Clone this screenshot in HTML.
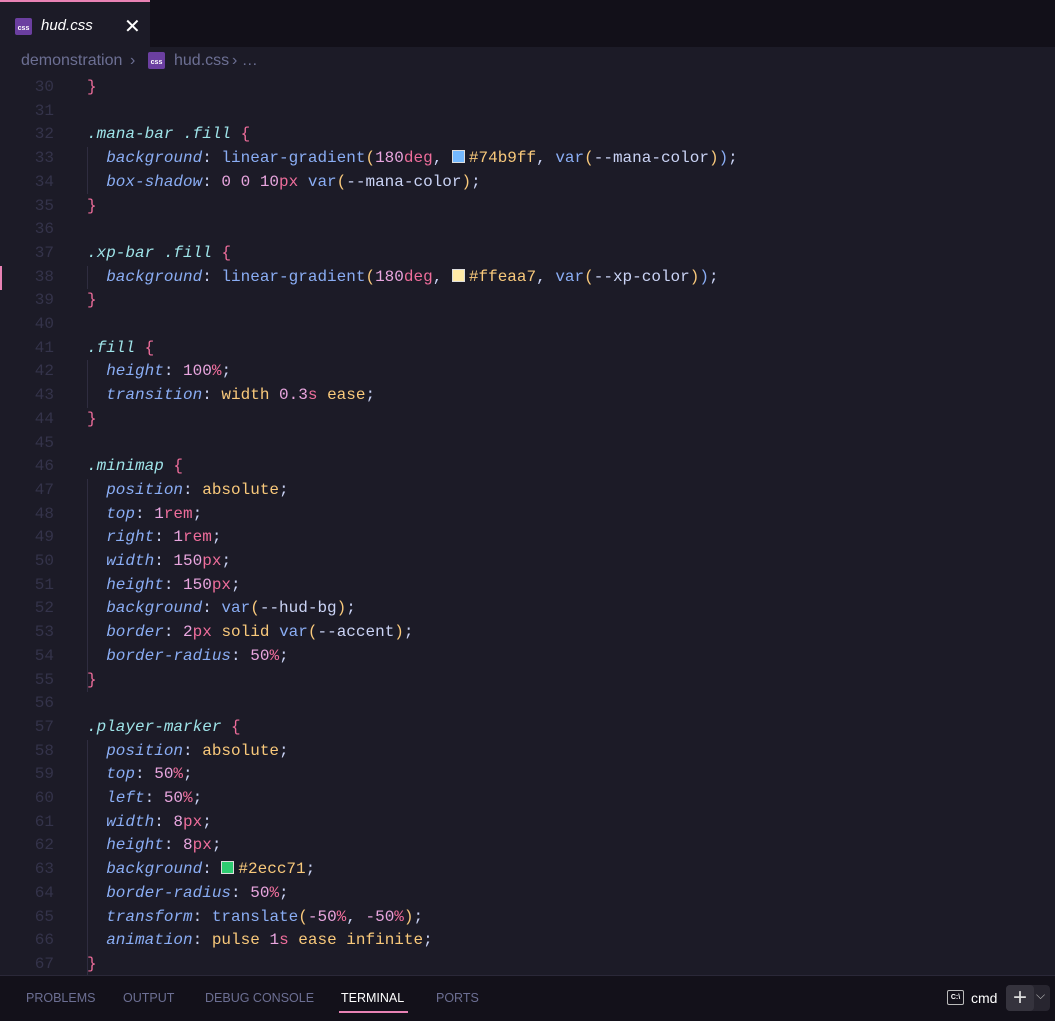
<!DOCTYPE html>
<html><head><meta charset="utf-8"><style>
*{margin:0;padding:0;box-sizing:border-box}
body{width:1055px;height:1021px;background:#1c1b27;overflow:hidden;position:relative;font-family:"Liberation Sans",sans-serif}
.tabbar{position:absolute;left:0;top:0;width:1055px;height:47px;background:#121019}
.tab{position:absolute;left:0;top:0;width:150px;height:47px;background:#1c1b27;border-top:2px solid #e882b4}
.icon{position:absolute;width:17px;height:17px;background:#6b3fa0;border-radius:2px;color:#fff;font:bold 7px "Liberation Sans",sans-serif;text-align:center;line-height:22px}
.tabname{position:absolute;left:41px;top:15px;font-size:15px;font-style:italic;color:#fff}
.close{position:absolute;left:124px;top:12px;color:#fff;font-size:20px}
.crumb{position:absolute;left:0;top:47px;width:1055px;height:28px;font-size:16px;color:#6c6f93}
.crumb span{position:absolute;top:5px}
.code{position:absolute;left:0;top:76px;font-family:"Liberation Mono",monospace;font-size:16px;line-height:23.7px;color:#cad3f5;white-space:pre}
.ln{position:absolute;left:0;width:54px;text-align:right;color:#34334a}
.tx{position:absolute;left:87px}
.s{color:#9ee3e8;font-style:italic}
.p{color:#8aadf4;font-style:italic}
.n{color:#e9a6df}
.u{color:#ee6d9b}
.k{color:#f9c97b}
.f{color:#8aadf4}
.b{color:#ee6d9b}
.sw{display:inline-block;width:13px;height:13px;border:1px solid #ddd;vertical-align:-1px;margin-right:4px}
.guide{position:absolute;left:87px;width:1px;background:#2f2d40}
.panel{position:absolute;left:0;top:975px;width:1055px;height:46px;background:#13111a;border-top:1px solid #2a2838}
.pt{position:absolute;top:15px;font-size:12.5px;color:#6c6f93}
</style></head><body>
<div class="tabbar"><div class="tab">
<div class="icon" style="left:15px;top:16px">css</div>
<div class="tabname">hud.css</div><div class="close">✕</div></div></div>
<div class="crumb"><span style="left:21px">demonstration</span><span style="left:130px">›</span>
<div class="icon" style="left:148px;top:5px">css</div>
<span style="left:174px">hud.css</span><span style="left:232px">› …</span></div>
<div style="position:absolute;left:0;top:266px;width:2px;height:24px;background:#e882b4"></div>
<div class="code" id="c"></div>
<div class="panel">
<span class="pt" style="left:26px">PROBLEMS</span>
<span class="pt" style="left:123px">OUTPUT</span>
<span class="pt" style="left:205px">DEBUG CONSOLE</span>
<span class="pt" style="left:341px;color:#fff">TERMINAL</span>
<div style="position:absolute;left:339px;top:35px;width:69px;height:2px;background:#e882b4"></div>
<span class="pt" style="left:436px">PORTS</span>
<div style="position:absolute;left:947px;top:14px;width:17px;height:15px;border:1.5px solid #bbb;border-radius:2px;color:#fff;font:bold 7px 'Liberation Sans';text-align:center;line-height:13px">C:\</div>
<span class="pt" style="left:971px;color:#fff;font-size:14px;top:14px">cmd</span>
<div style="position:absolute;left:1006px;top:9px;width:44px;height:26px;background:#27252f;border-radius:4px"></div>
<div style="position:absolute;left:1006px;top:9px;width:28px;height:26px;background:#35333d;border-radius:4px;color:#ddd;font-size:24px;text-align:center;line-height:25px">+</div>
<span style="position:absolute;left:1036px;top:12px;color:#bbb;font-size:12px">⌵</span>
</div>
<script>
const L=[
'<span class="b">}</span>','',
'<span class="s">.mana-bar .fill</span> <span class="b">{</span>',
'  <span class="p">background</span>: <span class="f">linear-gradient</span><span class="k">(</span><span class="n">180</span><span class="u">deg</span>, <span class="sw" style="background:#74b9ff"></span><span class="k">#74b9ff</span>, <span class="f">var</span><span class="k">(</span>--mana-color<span class="k">)</span><span class="f">)</span>;',
'  <span class="p">box-shadow</span>: <span class="n">0 0 10</span><span class="u">px</span> <span class="f">var</span><span class="k">(</span>--mana-color<span class="k">)</span>;',
'<span class="b">}</span>','',
'<span class="s">.xp-bar .fill</span> <span class="b">{</span>',
'  <span class="p">background</span>: <span class="f">linear-gradient</span><span class="k">(</span><span class="n">180</span><span class="u">deg</span>, <span class="sw" style="background:#ffeaa7"></span><span class="k">#ffeaa7</span>, <span class="f">var</span><span class="k">(</span>--xp-color<span class="k">)</span><span class="f">)</span>;',
'<span class="b">}</span>','',
'<span class="s">.fill</span> <span class="b">{</span>',
'  <span class="p">height</span>: <span class="n">100</span><span class="u">%</span>;',
'  <span class="p">transition</span>: <span class="k">width</span> <span class="n">0.3</span><span class="u">s</span> <span class="k">ease</span>;',
'<span class="b">}</span>','',
'<span class="s">.minimap</span> <span class="b">{</span>',
'  <span class="p">position</span>: <span class="k">absolute</span>;',
'  <span class="p">top</span>: <span class="n">1</span><span class="u">rem</span>;',
'  <span class="p">right</span>: <span class="n">1</span><span class="u">rem</span>;',
'  <span class="p">width</span>: <span class="n">150</span><span class="u">px</span>;',
'  <span class="p">height</span>: <span class="n">150</span><span class="u">px</span>;',
'  <span class="p">background</span>: <span class="f">var</span><span class="k">(</span>--hud-bg<span class="k">)</span>;',
'  <span class="p">border</span>: <span class="n">2</span><span class="u">px</span> <span class="k">solid</span> <span class="f">var</span><span class="k">(</span>--accent<span class="k">)</span>;',
'  <span class="p">border-radius</span>: <span class="n">50</span><span class="u">%</span>;',
'<span class="b">}</span>','',
'<span class="s">.player-marker</span> <span class="b">{</span>',
'  <span class="p">position</span>: <span class="k">absolute</span>;',
'  <span class="p">top</span>: <span class="n">50</span><span class="u">%</span>;',
'  <span class="p">left</span>: <span class="n">50</span><span class="u">%</span>;',
'  <span class="p">width</span>: <span class="n">8</span><span class="u">px</span>;',
'  <span class="p">height</span>: <span class="n">8</span><span class="u">px</span>;',
'  <span class="p">background</span>: <span class="sw" style="background:#2ecc71"></span><span class="k">#2ecc71</span>;',
'  <span class="p">border-radius</span>: <span class="n">50</span><span class="u">%</span>;',
'  <span class="p">transform</span>: <span class="f">translate</span><span class="k">(</span><span class="n">-50</span><span class="u">%</span>, <span class="n">-50</span><span class="u">%</span><span class="k">)</span>;',
'  <span class="p">animation</span>: <span class="k">pulse</span> <span class="n">1</span><span class="u">s</span> <span class="k">ease infinite</span>;',
'<span class="b">}</span>'];
let h='';const lh=23.7;
L.forEach((t,i)=>{h+=`<div class="ln" style="top:${i*lh}px">${30+i}</div><div class="tx" style="top:${i*lh}px">${t}</div>`;});
[[3,2],[8,1],[12,2],[17,9],[28,10]].forEach(([s,n])=>{h+=`<div class="guide" style="top:${s*lh}px;height:${n*lh}px"></div>`;});
document.getElementById('c').innerHTML=h;
</script>
</body></html>
